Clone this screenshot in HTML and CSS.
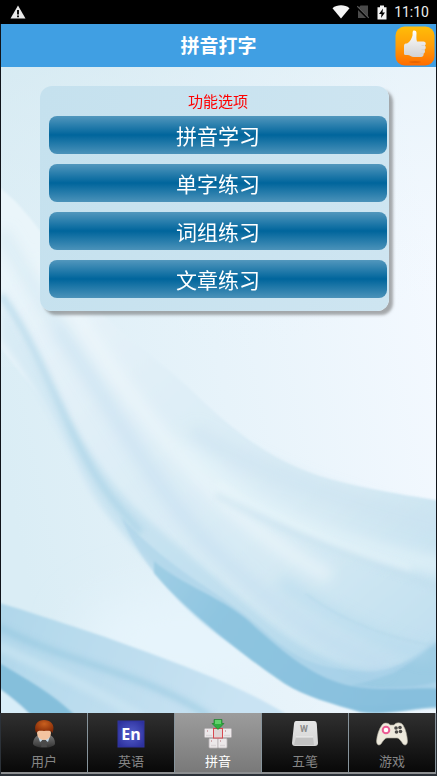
FILE: index.html
```
<!DOCTYPE html>
<html lang="zh-CN">
<head>
  <meta charset="UTF-8" />
  <meta name="viewport" content="width=device-width, initial-scale=1.0" />
  <title>拼音打字</title>
  <link rel="stylesheet" href="styles.css">
</head>
<body>
  <div class="status-bar">
    <svg class="warn" width="16" height="14" viewBox="0 0 16 14">
      <path d="M8 0.5L15.5 13.5H0.5z" fill="#e8e8e8"/>
      <path d="M7 5h2v4.5H7zM7 10.5h2v1.8H7z" fill="#111"/>
    </svg>
    <svg width="18" height="14" viewBox="0 0 18 14">
      <path d="M9 13.5L0.5 3.2C5-0.6 13-0.6 17.5 3.2z" fill="#f4f4f4"/>
    </svg>
    <svg class="no-sim" width="12" height="14" viewBox="0 0 12 14">
      <path d="M3.5 0.5H11V13H1V3.5z" fill="#4a4a4a"/>
      <path d="M0 2.2L11.6 13.8" stroke="#000" stroke-width="2.4"/>
      <path d="M0.3 1.2L11.8 12.8" stroke="#5c5c5c" stroke-width="1.2"/>
    </svg>
    <svg class="battery" width="10" height="15" viewBox="0 0 10 15">
      <path d="M3 0.5h4v1.7h2.5V14.5h-9V2.2H3z" fill="#f4f4f4"/>
      <path d="M6 3.5L2 9h2.5L4 13l4-5.6H5.5z" fill="#000"/>
    </svg>
    <span class="clock">11:10</span>
  </div>

  <header class="title-bar">
    <h1>拼音打字</h1>
    <button class="like" type="button" aria-label="推荐">
      <svg width="40" height="40" viewBox="0 0 40 40">
        <defs>
          <linearGradient id="orange" x1="0" y1="0" x2="0" y2="1">
            <stop offset="0" stop-color="#ffbd08"/>
            <stop offset="0.5" stop-color="#ff9d08"/>
            <stop offset="1" stop-color="#ff6c00"/>
          </linearGradient>
          <linearGradient id="hand" x1="0" y1="0" x2="0" y2="1">
            <stop offset="0" stop-color="#fff"/>
            <stop offset="1" stop-color="#d2d2d2"/>
          </linearGradient>
        </defs>
        <rect x="0.5" y="0.5" width="39" height="39" rx="9" fill="url(#orange)"/>
        <ellipse cx="20" cy="36" rx="6" ry="0.8" fill="#e06000"/>
        <path d="M18 5C19 4 21.500 4.500 21.500 7C21.500 10 21 13 22 15.500H28.500C31 15.500 31.500 18.500 29.800 19.500C31.300 20.500 31 23 29.500 23.800C30.500 25 30 27.200 28.500 27.800C29 29.500 27.800 31 26 31H19C16 31 15 29 12.500 29H10.500C9 29 9 28 9 27V20C9 18 10 17.500 12 17.500C15 16 17 12 17.500 9.500C17.800 8 17.300 6 18 5z" fill="url(#hand)"/>
        <path d="M26.500 19.500h3M26.500 23.800h3M25.500 27.800h3" stroke="#c9c9c9" stroke-width="0.6"/>
      </svg>
    </button>
  </header>

  <main class="content">
    <!-- flowing ribbon wallpaper -->
    <svg class="wallpaper" viewBox="0 0 435 646" preserveAspectRatio="none" aria-hidden="true">
      <defs>
        <linearGradient id="sky" x1="0" y1="0.6" x2="1" y2="0.3">
          <stop offset="0" stop-color="#daedf5"/>
          <stop offset="0.5" stop-color="#e7f3fa"/>
          <stop offset="1" stop-color="#f4f9ff"/>
        </linearGradient>
        <linearGradient id="topTint" x1="0" y1="0" x2="0.5" y2="1">
          <stop offset="0" stop-color="#d4e9f1" stop-opacity="0.7"/>
          <stop offset="1" stop-color="#e6f3f9" stop-opacity="0"/>
        </linearGradient>
        <linearGradient id="veil" gradientUnits="userSpaceOnUse" x1="40" y1="170" x2="390" y2="600">
          <stop offset="0" stop-color="#eaf5fa"/>
          <stop offset="0.4" stop-color="#deeef7"/>
          <stop offset="0.7" stop-color="#d6eaf4"/>
          <stop offset="1" stop-color="#c2e0f0"/>
        </linearGradient>
        <linearGradient id="fold" gradientUnits="userSpaceOnUse" x1="20" y1="260" x2="380" y2="610">
          <stop offset="0" stop-color="#d2e8f3"/>
          <stop offset="0.5" stop-color="#bcdded"/>
          <stop offset="1" stop-color="#a9d2e8"/>
        </linearGradient>
        <linearGradient id="deep" gradientUnits="userSpaceOnUse" x1="120" y1="450" x2="400" y2="640">
          <stop offset="0" stop-color="#b8dceb"/>
          <stop offset="0.4" stop-color="#8fc6e0"/>
          <stop offset="1" stop-color="#85bedc"/>
        </linearGradient>
        <linearGradient id="low" gradientUnits="userSpaceOnUse" x1="0" y1="540" x2="230" y2="646">
          <stop offset="0" stop-color="#b0d7ea"/>
          <stop offset="1" stop-color="#c9e3f3"/>
        </linearGradient>
        <filter id="soft1" x="-10%" y="-10%" width="120%" height="120%"><feGaussianBlur stdDeviation="1"/></filter>
        <filter id="soft3" x="-10%" y="-10%" width="120%" height="120%"><feGaussianBlur stdDeviation="3"/></filter>
        <filter id="soft7" x="-20%" y="-20%" width="140%" height="140%"><feGaussianBlur stdDeviation="7"/></filter>
        <filter id="soft30" x="-50%" y="-50%" width="200%" height="200%"><feGaussianBlur stdDeviation="24"/></filter>
      </defs>
      <rect width="435" height="646" fill="url(#sky)"/>
      <rect width="435" height="300" fill="url(#topTint)"/>
      <ellipse cx="180" cy="575" rx="100" ry="50" fill="#e6f4fc" filter="url(#soft30)"/>
      <g filter="url(#soft1)">
        <path d="M-5 118C20 135 45 170 75 215S150 285 187 320C230 362 260 385 300 402S400 427 440 434V642C415 640 390 648 360 645C330 636 310 630 283 616C255 596 230 577 206 556C185 540 170 524 153 506C138 488 128 472 110 453C95 438 88 428 80 413C70 392 66 380 60 370C50 352 44 338 33 323L-5 275z" fill="url(#veil)"/>
      </g>
      <g filter="url(#soft3)">
        <path d="M0 240C30 280 50 325 72 360C95 392 115 425 150 455C190 490 220 515 255 545C290 575 325 598 365 602C400 604 420 590 435 570V636C400 638 370 645 335 632C275 605 205 552 156 503C125 472 98 440 84 413C62 372 35 318 0 272z" fill="url(#fold)" opacity="0.7"/>
      </g>
      <g filter="url(#soft1)">
        <path d="M153 494C180 518 225 532 250 556C285 588 315 612 350 619C385 625 412 620 440 622V640C415 640 385 649 360 645C330 636 305 630 283 616C250 594 185 545 153 506z" fill="url(#deep)"/>
        <path d="M120 450C165 498 200 515 235 541C275 570 290 599 350 603C392 610 410 590 440 572V640C410 635 380 640 350 638C300 634 265 600 235 580C195 558 140 500 120 450z" fill="#8fc4e0" opacity="0.3"/>
        <path d="M393 606C410 596 425 584 440 574V614C410 622 380 622 350 618C365 616 380 610 393 606z" fill="#8dc4dd" opacity="0.45"/>
      </g>
      <g filter="url(#soft7)" fill="none">
        <path d="M55 260C100 320 150 420 210 480S330 580 385 600" stroke="#bcd9ef" stroke-width="14" opacity="0.45"/>
        <path d="M0 165C35 225 70 280 110 340" stroke="#cfe6f1" stroke-width="12" opacity="0.6"/>
        <path d="M40 190C85 265 120 320 175 385S290 490 330 510" stroke="#f0f8fc" stroke-width="16" opacity="0.6"/>
        <path d="M180 375C225 425 300 470 445 500" stroke="#e4f3f9" stroke-width="18" opacity="0.7"/>
        <path d="M190 365C260 405 340 435 445 460" stroke="#c9e2ef" stroke-width="16" opacity="0.5"/>
        <path d="M280 515C330 550 390 580 430 588" stroke="#b3d8ec" stroke-width="12" opacity="0.6"/>
      </g>
      <g filter="url(#soft3)" fill="none">
        <path d="M0 228C30 270 50 320 75 372S120 442 140 465" stroke="#9ccce3" stroke-width="6" opacity="0.6"/>
        <path d="M215 428C290 470 370 495 440 521" stroke="#b9d9ec" stroke-width="4" opacity="0.5"/>
        <path d="M215 415C280 455 350 485 410 501" stroke="#edf8fb" stroke-width="4" opacity="0.6"/>
      </g>
      <g filter="url(#soft1)" fill="none">
        <path d="M305 527C350 560 395 572 438 580" stroke="#aed5e9" stroke-width="2" opacity="0.4"/>
        <path d="M-5 535C30 545 55 554 83 563S140 583 167 593C210 609 250 625 290 650H-5z" fill="url(#low)"/>
      </g>
      <g filter="url(#soft3)" fill="none">
        <path d="M-5 558C60 595 140 604 210 650" stroke="#88c1dc" stroke-width="5" opacity="0.6"/>
        <path d="M-5 578C40 600 75 612 140 650" stroke="#cfe7f4" stroke-width="10" opacity="0.6"/>
      </g>
      <g filter="url(#soft1)">
        <path d="M-5 594C25 612 50 625 76 650H30C20 640 10 632-5 619z" fill="#85bfdb"/>
        <path d="M-5 619C10 630 20 638 32 650H-5z" fill="#d8edf8"/>
      </g>
    </svg>

    <section class="panel">
      <h2>功能选项</h2>
      <button type="button" class="option">拼音学习</button>
      <button type="button" class="option">单字练习</button>
      <button type="button" class="option">词组练习</button>
      <button type="button" class="option">文章练习</button>
    </section>
  </main>

  <nav class="tabs">
    <a href="#user" class="tab">
      <svg width="32" height="32" viewBox="0 0 32 32">
        <defs>
          <radialGradient id="hair" cx="0.5" cy="0.3" r="0.7">
            <stop offset="0" stop-color="#c9601f"/>
            <stop offset="1" stop-color="#7f2705"/>
          </radialGradient>
          <linearGradient id="coat" x1="0" y1="0" x2="0" y2="1">
            <stop offset="0" stop-color="#777"/>
            <stop offset="1" stop-color="#333"/>
          </linearGradient>
        </defs>
        <path d="M5 26C5 20 9 17 12 17H20C24 17 27 20 27 26C24 31 8 31 5 26z" fill="url(#coat)"/>
        <path d="M10 18L12 24L16 21L20 24L22 18z" fill="#c4dcec"/>
        <path d="M14 22h4l1 7h-6z" fill="#4a4a4a"/>
        <ellipse cx="16" cy="15" rx="7" ry="7" fill="#f3c4a0"/>
        <path d="M8 15C5 6 10 2 16 2S28 6 24.500 15C23 12 19 13 16 13S10 12 8 15z" fill="url(#hair)"/>
      </svg>
      <span>用户</span>
    </a>
    <a href="#english" class="tab">
      <svg width="32" height="32" viewBox="0 0 32 32">
        <defs>
          <radialGradient id="blue" r="0.7">
            <stop offset="0" stop-color="#5560cc"/>
            <stop offset="1" stop-color="#282b98"/>
          </radialGradient>
        </defs>
        <rect x="3" y="3" width="26" height="26" fill="url(#blue)" stroke="#3034a0"/>
        <text x="16" y="22" class="en-text" text-anchor="middle">En</text>
      </svg>
      <span>英语</span>
    </a>
    <a href="#pinyin" class="tab active" aria-current="page">
      <svg width="32" height="32" viewBox="0 0 32 32">
        <g fill="#ece8ea" stroke="#b8b3b5" stroke-width="0.8">
          <rect x="2.500" y="10.500" width="9" height="9" rx="1"/>
          <rect x="20.500" y="10.500" width="9" height="9" rx="1"/>
          <rect x="7" y="20.500" width="9" height="9.500" rx="1"/>
          <rect x="16" y="20.500" width="9" height="9.500" rx="1"/>
        </g>
        <path d="M4 17.500h6M22 17.500h6M9 27.500h5M18 27.500h5" stroke="#dad5d8" stroke-width="1.500"/>
        <rect x="11.500" y="10.500" width="9" height="9.500" fill="#dfd4d5" stroke="#d84850"/>
        <path d="M5 13h1M23 13h1M9 23h1M18 23h1" stroke="#b36f74"/>
        <path d="M12 1.500H20V5.500H22L16 11.500L10 5.500H12z" fill="#2fae40" stroke="#157b26" stroke-width="0.6"/>
        <path d="M13 2H19V6H13z" fill="#63d06c"/>
      </svg>
      <span>拼音</span>
    </a>
    <a href="#wubi" class="tab">
      <svg width="32" height="32" viewBox="0 0 32 32">
        <defs>
          <linearGradient id="keycap" x1="0" y1="0" x2="0" y2="1">
            <stop offset="0" stop-color="#e6e6e6"/>
            <stop offset="1" stop-color="#d4d4d4"/>
          </linearGradient>
        </defs>
        <path d="M7 3H25C27 3 27.500 4 27.800 6L29 25C29 27 28 28 26 28H6C4 28 3 27 3 25L5 6C5.200 4 6 3 7 3z" fill="url(#keycap)"/>
        <path d="M7 19H24L25 27H5z" fill="#c2c2c2"/>
        <path d="M7 19H24" stroke="#eee"/>
        <text x="15" y="14" class="key-text" text-anchor="middle">W</text>
      </svg>
      <span>五笔</span>
    </a>
    <a href="#game" class="tab">
      <svg width="32" height="32" viewBox="0 0 32 32">
        <path d="M6 7C8 4 13 5 14 7H18C20 4 25 4 27 7C30 12 31 17 31.500 23C31.500 27 29 28 27 26C25 23 23 20 21 20H11C9 20 7 23 5 26C3 28 0.500 27 0.500 23C1 17 3 11 6 7z" fill="#ede9dc" stroke="#aaa698" stroke-width="0.6"/>
        <circle cx="10" cy="12" r="3.300" fill="#fff" stroke="#ec5b93" stroke-width="2"/>
        <g fill="#4b4947">
          <circle cx="20" cy="10" r="1.800"/>
          <circle cx="24" cy="9.500" r="1.800"/>
          <circle cx="20.500" cy="14" r="1.800"/>
          <circle cx="24.500" cy="13.500" r="1.800"/>
        </g>
      </svg>
      <span>游戏</span>
    </a>
  </nav>
</body>
</html>
```
FILE: styles.css
```
* {
  box-sizing: border-box;
}
body {
  margin: 0;
  min-height: 100vh;
  display: flex;
  flex-direction: column;
  background-color: #10141a;
  font-family: "Noto Sans CJK SC", sans-serif;
}
svg {
  display: block;
}
.status-bar {
  height: 24px;
  padding: 0 8px 0 10px;
  display: flex;
  align-items: center;
  background: #000;
  color: #eee;
}
.warn {
  margin-right: auto;
}
.no-sim {
  margin-left: 7px;
}
.battery {
  margin: 0 7px 0 8px;
}
.clock {
  font: 400 14px/24px Roboto, sans-serif;
}
.title-bar {
  position: relative;
  height: 43px;
  margin: 0 1px;
  background: #409fe3;
}
.title-bar h1 {
  margin: 0;
  text-align: center;
  font-size: 19px;
  font-weight: 700;
  line-height: 42px;
  color: #fff;
}
.like {
  position: absolute;
  top: 2px;
  right: 1px;
  padding: 0;
  border: 0;
  background: none;
}
.content {
  position: relative;
  flex: 1;
  margin: 0 1px;
  padding: 19px 47px 40px 39px;
}
.wallpaper {
  position: absolute;
  inset: 0;
  width: 100%;
  height: 100%;
}
.panel {
  position: relative;
  display: flex;
  flex-direction: column;
  gap: 10px;
  padding: 0 2px 13px 9px;
  border-radius: 12px;
  background: linear-gradient(100deg, #c5e1ee, #cee5f1);
  box-shadow: 4px 4px 3px rgba(90, 90, 90, 0.5);
}
.panel h2 {
  margin: 0 0 -10px;
  text-align: center;
  font-size: 15px;
  font-weight: 400;
  line-height: 30px;
  color: #f00;
}
.option {
  height: 38px;
  padding: 0;
  border: 0;
  border-radius: 8px;
  background: linear-gradient(#5297bd, #00659c 50%, #4b92b9);
  color: #fff;
  font-family: inherit;
  font-size: 21px;
  line-height: 36px;
}
.tabs {
  display: flex;
  height: 63px;
  padding: 0 1px 2px;
  background: #2b3138;
}
.tab {
  flex: 1;
  display: flex;
  flex-direction: column;
  align-items: center;
  padding-top: 5px;
  border-right: 1px solid #87949c;
  border-bottom: 2px solid #8d8f91;
  background: linear-gradient(#303030, #080808);
  color: #858585;
  font-size: 13px;
  line-height: 22px;
  text-decoration: none;
}
.tab.active {
  background: linear-gradient(#9c9c9c, #797979);
  color: #fff;
}
.en-text {
  font: 700 16px "Open Sans", sans-serif;
  fill: #fff;
}
.key-text {
  font: 700 9px Roboto, sans-serif;
  fill: #8b8b8b;
}
```
